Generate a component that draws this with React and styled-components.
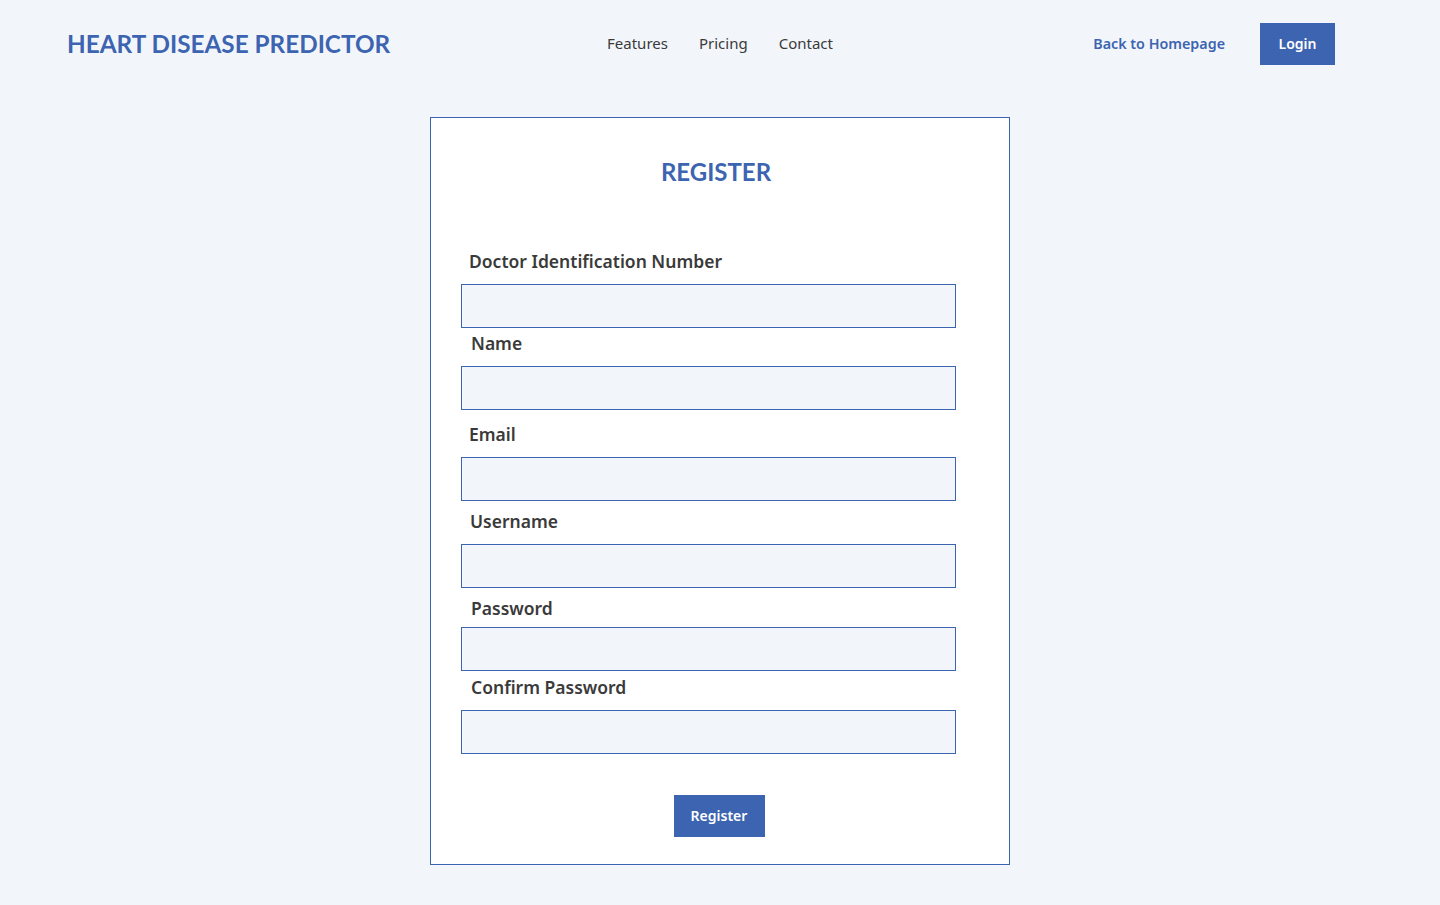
import styled, { createGlobalStyle } from 'styled-components';

const BLUE = '#3d64b0';

const GlobalStyle = createGlobalStyle`
  body {
    margin: 0;
    background: #f2f6fb;
    font-family: 'Noto Sans', sans-serif;
    color: #3a3a3a;
  }
`;

const Header = styled.header`
  display: grid;
  grid-template-columns: 1fr auto 1fr;
  align-items: center;
  height: 88px;
  padding: 0 67px;
`;

const Brand = styled.h1`
  margin: 0 0 2px;
  font-family: 'Lato', sans-serif;
  font-weight: 700;
  font-size: 24.3px;
  color: ${BLUE};
`;

const Nav = styled.nav`
  display: flex;
  gap: 31px;
  margin-bottom: 2px;
`;

const NavLink = styled.a`
  font-size: 15px;
  color: #3a3a3a;
  text-decoration: none;
`;

const Actions = styled.div`
  display: flex;
  justify-content: flex-end;
  align-items: center;
  gap: 35px;
  padding-right: 38px;
`;

const HomeLink = styled.a`
  font-size: 14.3px;
  font-weight: 600;
  color: ${BLUE};
  text-decoration: none;
  margin-bottom: 1px;
`;

const Button = styled.button`
  background: ${BLUE};
  color: #fff;
  border: none;
  font-family: 'Noto Sans', sans-serif;
  font-size: 14px;
  font-weight: 600;
  height: 42px;
  width: ${(p) => p.$width}px;
  padding: 0 0 1px;
  cursor: pointer;
`;

const Main = styled.main`
  display: flex;
  justify-content: center;
  padding: 29px 0 40px;
`;

const Card = styled.form`
  background: #fff;
  border: 1px solid ${BLUE};
  padding: 0 54px 27px 30px;
  width: 494px;
  display: flex;
  flex-direction: column;
`;

const Title = styled.h2`
  margin: 39px 0 0;
  text-align: center;
  font-family: 'Lato', sans-serif;
  font-weight: 700;
  font-size: 24px;
  line-height: 30px;
  color: ${BLUE};
  padding-left: 16px;
`;

const Label = styled.label`
  display: block;
  margin-top: ${(p) => p.$top}px;
  padding-left: ${(p) => p.$indent}px;
  font-size: 17.5px;
  font-weight: 600;
  line-height: 22px;
  color: #3a3a3a;
`;

const Input = styled.input`
  display: block;
  box-sizing: border-box;
  width: 495px;
  height: 44px;
  margin-top: ${(p) => p.$gap}px;
  background: #f2f6fb;
  border: 1px solid ${BLUE};
  border-radius: 0;
  outline: none;
`;

const Footer = styled.div`
  display: flex;
  justify-content: center;
  margin-top: 41px;
  padding-left: 22px;
`;

const fields = [
  { label: 'Doctor Identification Number', top: 63, indent: 8, gap: 12, type: 'text' },
  { label: 'Name', top: 4, indent: 10, gap: 12, type: 'text' },
  { label: 'Email', top: 13, indent: 8, gap: 12, type: 'email' },
  { label: 'Username', top: 9, indent: 9, gap: 12, type: 'text' },
  { label: 'Password', top: 9, indent: 10, gap: 8, type: 'password' },
  { label: 'Confirm Password', top: 5, indent: 10, gap: 12, type: 'password' },
];

export default function App() {
  return (
    <>
      <GlobalStyle />
      <Header>
        <Brand>HEART DISEASE PREDICTOR</Brand>
        <Nav>
          <NavLink href="#">Features</NavLink>
          <NavLink href="#">Pricing</NavLink>
          <NavLink href="#">Contact</NavLink>
        </Nav>
        <Actions>
          <HomeLink href="#">Back to Homepage</HomeLink>
          <Button type="button" $width={75}>Login</Button>
        </Actions>
      </Header>
      <Main>
        <Card onSubmit={(e) => e.preventDefault()}>
          <Title>REGISTER</Title>
          {fields.map((f) => (
            <div key={f.label}>
              <Label $top={f.top} $indent={f.indent}>{f.label}</Label>
              <Input type={f.type} $gap={f.gap} />
            </div>
          ))}
          <Footer>
            <Button type="submit" $width={91}>Register</Button>
          </Footer>
        </Card>
      </Main>
    </>
  );
}
